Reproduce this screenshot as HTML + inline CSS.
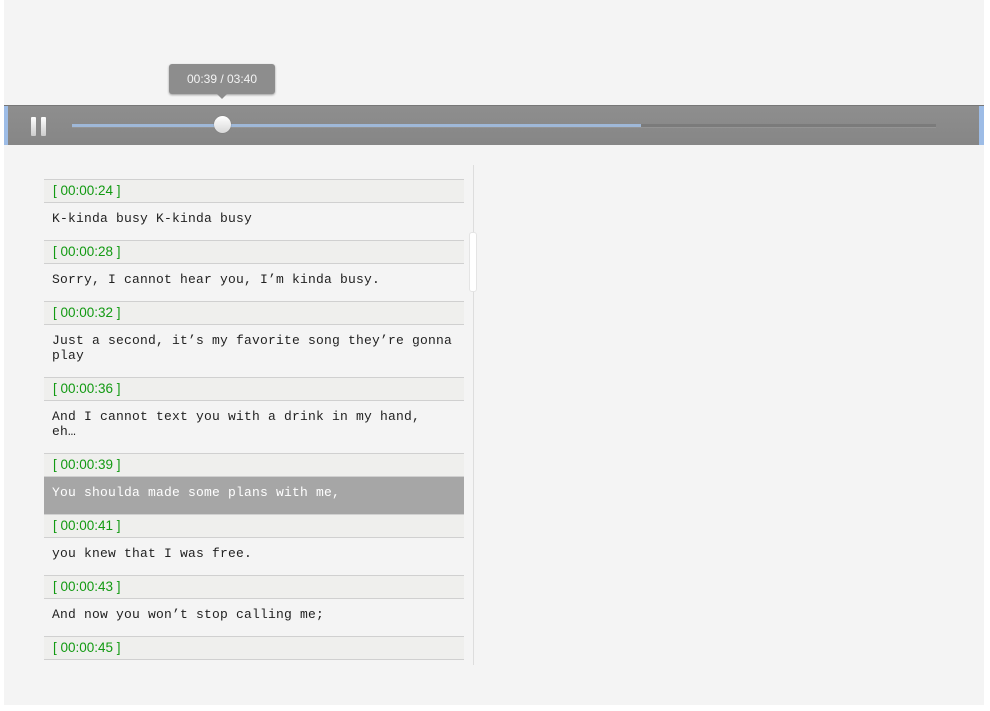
<!DOCTYPE html>
<html><head><style>
body{margin:0;width:990px;height:711px;background:#fff;position:relative;overflow:hidden;font-family:"Liberation Sans",sans-serif}
#bg{position:absolute;left:4px;top:0;width:980px;height:705px;background:#f4f4f4}
#bar{position:absolute;left:4px;top:105px;width:980px;height:40px;background:linear-gradient(#8e8e8e,#868686);border-top:1px solid #777;box-sizing:border-box}
#bar:before{content:"";position:absolute;left:0;top:0;width:4px;height:39px;background:#9dbce6}
#bar:after{content:"";position:absolute;right:0;top:0;width:5px;height:39px;background:#9dbce6}
.pb{position:absolute;top:11px;width:5px;height:19px;background:linear-gradient(#fff,#ccc);border-radius:1px}
#track{position:absolute;left:68px;top:18px;width:864px;height:3px;background:#7b7b7b;border-bottom:1px solid #949494}
#fill{position:absolute;left:68px;top:18px;width:569px;height:3px;background:#9fb8d8}
#thumb{position:absolute;left:210px;top:10px;width:17px;height:17px;border-radius:50%;background:linear-gradient(#fff,#d8d8d8);box-shadow:0 0 1px #666}
#tip{position:absolute;left:169px;top:64px;width:106px;height:30px;background:#8d8d8d;border-radius:3px;box-shadow:0 1px 2px #999;color:#f4f4f4;font-size:12px;text-align:center;line-height:30px}
#tip:after{content:"";position:absolute;left:48px;bottom:-5px;border:5px solid transparent;border-bottom:0;border-top-color:#8d8d8d}
.h{position:absolute;left:44px;height:22px;background:#efefed;border-top:1px solid #d0d0d0;border-bottom:1px solid #d0d0d0;color:#129a12;font-size:13.5px;line-height:22px;padding-left:9px;width:411px}
.t{position:absolute;left:44px;width:404px;padding:0 8px;font-family:"Liberation Mono",monospace;font-size:13px;line-height:15px;color:#222;letter-spacing:0.2px}
.hl{background:#a6a6a6;color:#fff;height:37px}
#vl{position:absolute;left:473px;top:165px;width:1px;height:500px;background:#ddd}
#sb{position:absolute;left:469px;top:232px;width:8px;height:60px;background:#fff;border:1px solid #e4e4e4;border-radius:3px;box-sizing:border-box}
</style></head><body>
<div id="bg"></div>
<div id="tip">00:39 / 03:40</div>
<div id="bar"><div class="pb" style="left:27px"></div><div class="pb" style="left:37px"></div><div id="track"></div><div id="fill"></div><div id="thumb"></div></div>
<div id="vl"></div><div id="sb"></div>
<div class="h" style="top:179px">[ 00:00:24 ]</div>
<div class="t" style="top:211px">K-kinda busy K-kinda busy</div>
<div class="h" style="top:240px">[ 00:00:28 ]</div>
<div class="t" style="top:272px">Sorry, I cannot hear you, I’m kinda busy.</div>
<div class="h" style="top:301px">[ 00:00:32 ]</div>
<div class="t" style="top:333px">Just a second, it’s my favorite song they’re gonna<br>play</div>
<div class="h" style="top:377px">[ 00:00:36 ]</div>
<div class="t" style="top:409px">And I cannot text you with a drink in my hand,<br>eh…</div>
<div class="h" style="top:453px">[ 00:00:39 ]</div>
<div class="t hl" style="top:477px;padding-top:8px;height:29px">You shoulda made some plans with me,</div>
<div class="h" style="top:514px">[ 00:00:41 ]</div>
<div class="t" style="top:546px">you knew that I was free.</div>
<div class="h" style="top:575px">[ 00:00:43 ]</div>
<div class="t" style="top:607px">And now you won’t stop calling me;</div>
<div class="h" style="top:636px">[ 00:00:45 ]</div>
</body></html>
